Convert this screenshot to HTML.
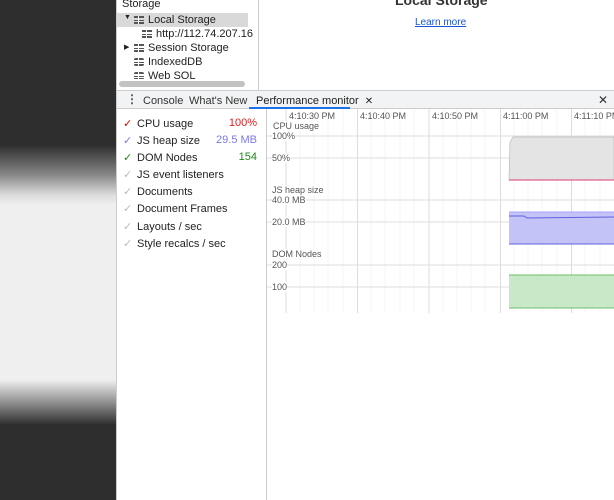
<!DOCTYPE html>
<html><head><style>
*{margin:0;padding:0;box-sizing:border-box}
body{width:614px;height:500px;overflow:hidden;position:relative;font-family:"Liberation Sans",sans-serif;font-size:11px;color:#222;background:#fff}
.abs{position:absolute}
.bg{left:0;top:0;width:116px;height:500px;background:linear-gradient(to bottom,#2e2e2e 0,#2e2e2e 145px,#888 175px,#dcdcdc 195px,#efefef 205px,#efefef 380px,#9a9a9a 400px,#2e2e2e 425px,#2e2e2e 500px)}
.tree div{position:absolute;white-space:nowrap;font-size:11px}
.grid{display:inline-block;width:10px;height:8px;border-top:2px solid #555;border-bottom:2px solid #555;background:linear-gradient(#555,#555) 0 2px/10px 1px no-repeat;vertical-align:-1px;margin-right:4px;position:relative}
.grid:after{content:"";position:absolute;left:4px;top:-2px;width:1px;height:8px;background:#fff}
.lbl{position:absolute;font-size:9px;color:#555;white-space:nowrap}
.m{position:absolute;left:123px;font-size:11px;white-space:nowrap}
.m .c{display:inline-block;width:14px;color:#bbb}
.v{position:absolute;right:357px;font-size:11px}
</style></head><body>
<div class="abs bg"></div>
<div class="abs" style="left:116px;top:0;width:1px;height:500px;background:#ccc"></div>
<div class="abs tree" style="left:117px;top:0;width:141px;height:90px;background:#fff">
 <div style="left:5px;top:-2px">Storage</div>
 <div style="left:0;top:13px;width:131px;height:14px;background:#d9d9d9"></div>
 <div style="left:7px;top:14px;font-size:7px">▼</div>
 <div style="left:17px;top:14px"><span class="grid"></span>Local Storage</div>
 <div style="left:25px;top:28px"><span class="grid"></span>http://112.74.207.16</div>
 <div style="left:7px;top:43px;font-size:7px">▶</div>
 <div style="left:17px;top:42px"><span class="grid"></span>Session Storage</div>
 <div style="left:17px;top:56px"><span class="grid" style="border-radius:2px"></span>IndexedDB</div>
 <div style="left:17px;top:70px"><span class="grid" style="border-radius:2px"></span>Web SQL</div>
 <div style="left:0;top:79px;width:141px;height:11px;background:#fff"></div>
 <div style="left:2px;top:81px;width:126px;height:6px;border-radius:3px;background:#c2c2c2"></div>
</div>
<div class="abs" style="left:258px;top:0;width:1px;height:90px;background:#ccc"></div>
<div class="abs" style="left:395px;top:-8px;font-size:14px;font-weight:bold;color:#333">Local Storage</div>
<div class="abs" style="left:415px;top:17px;font-size:10px;color:#1a55d6;text-decoration:underline">Learn more</div>
<div class="abs" style="left:117px;top:90px;width:497px;height:19px;background:#f1f3f4;border-top:1px solid #ccc;border-bottom:1px solid #ccc"></div>
<div class="abs" style="left:126px;top:92px;font-size:12px;font-weight:bold;color:#555;line-height:14px">⋮</div>
<div class="abs" style="left:143px;top:95px;color:#333">Console</div>
<div class="abs" style="left:189px;top:95px;color:#333">What's New</div>
<div class="abs" style="left:256px;top:95px;color:#222">Performance monitor <span style="font-size:10px;margin-left:3px">✕</span></div>
<div class="abs" style="left:249px;top:107px;width:101px;height:2px;background:#1a73e8"></div>
<div class="abs" style="left:598px;top:93px;font-size:12px;color:#333">✕</div>
<div class="m" style="top:117px"><span class="c" style="color:#d00">✓</span>CPU usage</div><div class="v" style="top:117px;color:#e02020">100%</div>
<div class="m" style="top:134px"><span class="c" style="color:#77f">✓</span>JS heap size</div><div class="v" style="top:134px;color:#7a7aee">29.5 MB</div>
<div class="m" style="top:151px"><span class="c" style="color:#1a8a1a">✓</span>DOM Nodes</div><div class="v" style="top:151px;color:#1a8a1a">154</div>
<div class="m" style="top:168px"><span class="c">✓</span>JS event listeners</div>
<div class="m" style="top:185px"><span class="c">✓</span>Documents</div>
<div class="m" style="top:202px"><span class="c">✓</span>Document Frames</div>
<div class="m" style="top:220px"><span class="c">✓</span>Layouts / sec</div>
<div class="m" style="top:237px"><span class="c">✓</span>Style recalcs / sec</div>
<div class="abs" style="left:266px;top:109px;width:1px;height:391px;background:#ccc"></div>
<svg class="abs" style="left:267px;top:109px" width="347" height="205">
 <g stroke="#f6f6f6">
  <line x1="33" y1="0" x2="33" y2="204"/><line x1="47" y1="0" x2="47" y2="204"/><line x1="61" y1="0" x2="61" y2="204"/><line x1="76" y1="0" x2="76" y2="204"/>
  <line x1="104" y1="0" x2="104" y2="204"/><line x1="118" y1="0" x2="118" y2="204"/><line x1="133" y1="0" x2="133" y2="204"/><line x1="147" y1="0" x2="147" y2="204"/>
  <line x1="176" y1="0" x2="176" y2="204"/><line x1="190" y1="0" x2="190" y2="204"/><line x1="204" y1="0" x2="204" y2="204"/><line x1="218" y1="0" x2="218" y2="204"/>
  <line x1="247" y1="0" x2="247" y2="204"/><line x1="261" y1="0" x2="261" y2="204"/><line x1="275" y1="0" x2="275" y2="204"/><line x1="290" y1="0" x2="290" y2="204"/>
  <line x1="318" y1="0" x2="318" y2="204"/><line x1="333" y1="0" x2="333" y2="204"/>
 </g>
 <g stroke="#ddd">
  <line x1="19" y1="0" x2="19" y2="204"/><line x1="90.5" y1="0" x2="90.5" y2="204"/><line x1="162" y1="0" x2="162" y2="204"/><line x1="233.5" y1="0" x2="233.5" y2="204"/><line x1="304.5" y1="0" x2="304.5" y2="204"/>
  <line x1="0" y1="27" x2="347" y2="27"/><line x1="0" y1="49" x2="347" y2="49"/>
  <line x1="0" y1="91" x2="347" y2="91"/><line x1="0" y1="113" x2="347" y2="113"/>
  <line x1="0" y1="156" x2="347" y2="156"/><line x1="0" y1="178" x2="347" y2="178"/>
 </g>
 <path d="M242 71 L243 33 L246 28 L347 28 L347 71 Z" fill="#e4e4e4" stroke="#bbb" stroke-width="0.7"/>
 <line x1="242" y1="71" x2="347" y2="71" stroke="#e06090" stroke-width="1.2"/>
 <rect x="242" y="103" width="105" height="32" fill="#c3c3f8"/>
 <line x1="242" y1="103" x2="347" y2="103" stroke="#a6a6f5"/>
 <path d="M242 107 L257 107 L260 109 L347 108" fill="none" stroke="#6060e0"/>
 <line x1="242" y1="135" x2="347" y2="135" stroke="#6060e0"/>
 <rect x="242" y="166" width="105" height="33" fill="#c8e8c8"/>
 <line x1="242" y1="166" x2="347" y2="166" stroke="#6abf6a"/>
 <line x1="242" y1="199" x2="347" y2="199" stroke="#6abf6a"/>
</svg>
<div class="lbl" style="left:289px;top:111px">4:10:30 PM</div>
<div class="lbl" style="left:360px;top:111px">4:10:40 PM</div>
<div class="lbl" style="left:432px;top:111px">4:10:50 PM</div>
<div class="lbl" style="left:503px;top:111px">4:11:00 PM</div>
<div class="lbl" style="left:574px;top:111px">4:11:10 PM</div>
<div class="lbl" style="left:273px;top:121px;background:#fff">CPU usage</div>
<div class="lbl" style="left:272px;top:131px;background:#fff">100%</div>
<div class="lbl" style="left:272px;top:153px;background:#fff">50%</div>
<div class="lbl" style="left:272px;top:185px;background:#fff">JS heap size</div>
<div class="lbl" style="left:272px;top:195px;background:#fff">40.0 MB</div>
<div class="lbl" style="left:272px;top:217px;background:#fff">20.0 MB</div>
<div class="lbl" style="left:272px;top:249px;background:#fff">DOM Nodes</div>
<div class="lbl" style="left:272px;top:260px;background:#fff">200</div>
<div class="lbl" style="left:272px;top:282px;background:#fff">100</div>
</body></html>
